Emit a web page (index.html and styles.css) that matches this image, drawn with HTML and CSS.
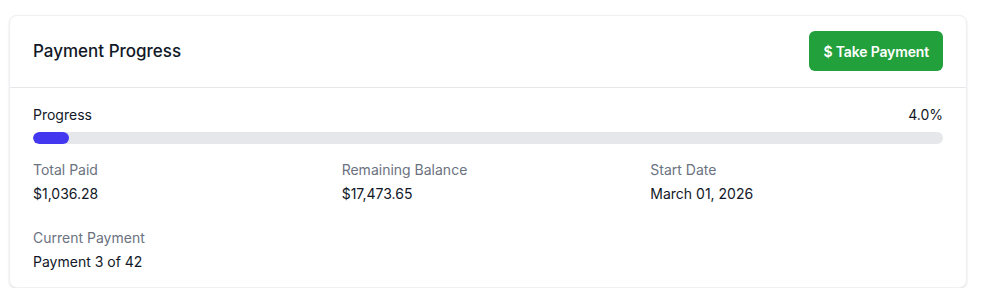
FILE: index.html
```html
<!DOCTYPE html>
<html lang="en">
<head>
  <meta charset="UTF-8" />
  <meta name="viewport" content="width=device-width, initial-scale=1.0" />
  <title>Payment Progress</title>
  <link rel="stylesheet" href="styles.css">
</head>
<body>
  <div class="card">
    <div class="card-header">
      <h2>Payment Progress</h2>
      <button class="pay-btn">$ Take Payment</button>
    </div>
    <div class="card-body">
      <div class="progress-row">
        <span>Progress</span>
        <span>4.0%</span>
      </div>
      <div class="track">
        <div class="fill" style="width: 4%"></div>
      </div>
      <div class="stats">
        <div class="stat">
          <div class="label">Total Paid</div>
          <div class="value">$1,036.28</div>
        </div>
        <div class="stat">
          <div class="label">Remaining Balance</div>
          <div class="value">$17,473.65</div>
        </div>
        <div class="stat">
          <div class="label">Start Date</div>
          <div class="value">March 01, 2026</div>
        </div>
        <div class="stat">
          <div class="label">Current Payment</div>
          <div class="value">Payment 3 of 42</div>
        </div>
      </div>
    </div>
  </div>
</body>
</html>
```

FILE: styles.css
```css
* {
  box-sizing: border-box;
}
body {
  margin: 0;
  font-family: Inter, 'Noto Sans', sans-serif;
  background: #fff;
  color: #111827;
  padding: 15px 18px 0 9px;
}
.card {
  background: #fff;
  border: 1px solid #eef0f3;
  border-radius: 8px;
  box-shadow: 0 1px 3px rgba(0, 0, 0, 0.08), 0 1px 2px rgba(0, 0, 0, 0.04);
}
.card-header {
  display: flex;
  justify-content: space-between;
  align-items: center;
  padding: 15px 23px 16px 23px;
  border-bottom: 1px solid #e5e7eb;
}
.card-header h2 {
  margin: 0;
  font-size: 17px;
  font-weight: 500;
  line-height: 28px;
}
.pay-btn {
  height: 40px;
  padding: 0 14px;
  border: none;
  border-radius: 6px;
  background: #22a03c;
  color: #fff;
  font-family: inherit;
  font-size: 14px;
  font-weight: 600;
  letter-spacing: -0.15px;
  cursor: pointer;
}
.card-body {
  padding: 17px 23px 15px 23px;
}
.progress-row {
  display: flex;
  justify-content: space-between;
  font-size: 14px;
  line-height: 20px;
  margin-bottom: 7px;
}
.track {
  height: 12px;
  background: #e5e7eb;
  border-radius: 9999px;
  overflow: hidden;
}
.fill {
  height: 100%;
  background: #4338f0;
  border-radius: 9999px;
}
.stats {
  display: grid;
  grid-template-columns: repeat(3, 1fr);
  column-gap: 16px;
  row-gap: 24px;
  margin-top: 16px;
}
.label {
  font-size: 14px;
  line-height: 20px;
  color: #6b7280;
}
.value {
  margin-top: 4px;
  font-size: 14px;
  line-height: 20px;
  font-weight: 400;
  color: #111827;
}
```
